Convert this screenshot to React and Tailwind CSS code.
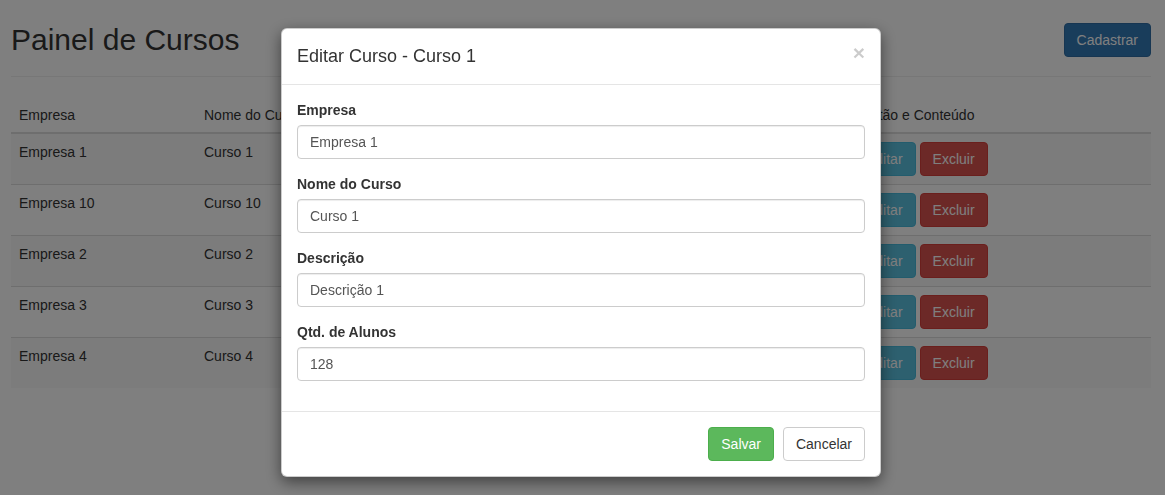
import { useState } from "react";

const cursos = [
  { empresa: "Empresa 1", nome: "Curso 1", descricao: "Descrição 1", alunos: 128 },
  { empresa: "Empresa 10", nome: "Curso 10", descricao: "Descrição 10", alunos: 40 },
  { empresa: "Empresa 2", nome: "Curso 2", descricao: "Descrição 2", alunos: 75 },
  { empresa: "Empresa 3", nome: "Curso 3", descricao: "Descrição 3", alunos: 32 },
  { empresa: "Empresa 4", nome: "Curso 4", descricao: "Descrição 4", alunos: 210 },
];

const Field = ({ label, value, onChange }) => (
  <div className="mb-[15px]">
    <label className="block mb-[5px] text-[14px] leading-[20px] font-bold text-[#333]">
      {label}
    </label>
    <input
      value={value}
      onChange={(e) => onChange(e.target.value)}
      className="block w-full h-[34px] px-[12px] py-[6px] text-[14px] leading-[20px] text-[#555] bg-white border border-[#ccc] rounded-[4px] shadow-[inset_0_1px_1px_rgba(0,0,0,0.075)] outline-none"
    />
  </div>
);

const App = () => {
  const [form, setForm] = useState({
    empresa: "Empresa 1",
    nome: "Curso 1",
    descricao: "Descrição 1",
    alunos: "128",
  });

  const update = (key) => (value) => setForm({ ...form, [key]: value });

  return (
    <div className="relative min-h-[495px] bg-white text-[#333] text-[14px] leading-[20px] font-['Liberation_Sans',Arial,sans-serif]">
      {/* Page */}
      <div className="pl-[11px] pr-[14px]">
        <div className="flex items-start justify-between pt-[23px] pb-[19px] border-b border-[#eee]">
          <h2 className="text-[30px] leading-[33px] font-normal">Painel de Cursos</h2>
          <button className="h-[34px] px-[12px] text-white bg-[#337ab7] border border-[#2e6da4] rounded-[4px]">
            Cadastrar
          </button>
        </div>

        <table className="w-full mt-[20px] table-fixed">
          <colgroup>
            <col className="w-[185px]" />
            <col className="w-[220px]" />
            <col className="w-[260px]" />
            <col className="w-[169px]" />
            <col className="w-[306px]" />
          </colgroup>
          <thead>
            <tr className="text-left">
              <th className="px-[8px] pt-[8px] pb-[7px] font-normal border-b-2 border-[#ddd]">Empresa</th>
              <th className="px-[8px] pt-[8px] pb-[7px] font-normal border-b-2 border-[#ddd]">Nome do Curso</th>
              <th className="px-[8px] pt-[8px] pb-[7px] font-normal border-b-2 border-[#ddd]">Descrição</th>
              <th className="px-[8px] pt-[8px] pb-[7px] font-normal border-b-2 border-[#ddd]">Qtd. de Alunos</th>
              <th className="px-[8px] pt-[8px] pb-[7px] font-normal border-b-2 border-[#ddd]">Gestão e Conteúdo</th>
            </tr>
          </thead>
          <tbody>
            {cursos.map((c, i) => (
              <tr key={c.empresa} className={i % 2 === 0 ? "bg-[#f9f9f9]" : "bg-white"}>
                <td className="p-[8px] align-top border-t border-[#ddd]">{c.empresa}</td>
                <td className="p-[8px] align-top border-t border-[#ddd]">{c.nome}</td>
                <td className="p-[8px] align-top border-t border-[#ddd]">{c.descricao}</td>
                <td className="p-[8px] align-top border-t border-[#ddd]">{c.alunos}</td>
                <td className="p-[8px] align-top border-t border-[#ddd]">
                  <div className="flex gap-[4px]">
                    <button className="h-[34px] px-[12px] text-white bg-[#5bc0de] border border-[#46b8da] rounded-[4px]">
                      Editar
                    </button>
                    <button className="h-[34px] px-[12px] text-white bg-[#d9534f] border border-[#d43f3a] rounded-[4px]">
                      Excluir
                    </button>
                  </div>
                </td>
              </tr>
            ))}
          </tbody>
        </table>
      </div>

      {/* Backdrop */}
      <div className="fixed inset-0 bg-black/50" />

      {/* Modal */}
      <div className="fixed inset-0 overflow-hidden">
        <div className="w-[600px] ml-[281px] mt-[28px] bg-white border border-black/20 rounded-[6px] shadow-[0_5px_15px_rgba(0,0,0,0.5)]">
          <div className="flex items-start justify-between p-[15px] border-b border-[#e5e5e5]">
            <h4 className="text-[18px] leading-[25px] font-normal">Editar Curso - Curso 1</h4>
            <button className="-mt-[2px] text-[21px] leading-[21px] font-bold text-black opacity-20">
              ×
            </button>
          </div>

          <div className="p-[15px]">
            <Field label="Empresa" value={form.empresa} onChange={update("empresa")} />
            <Field label="Nome do Curso" value={form.nome} onChange={update("nome")} />
            <Field label="Descrição" value={form.descricao} onChange={update("descricao")} />
            <Field label="Qtd. de Alunos" value={form.alunos} onChange={update("alunos")} />
          </div>

          <div className="flex justify-end gap-[9px] p-[15px] border-t border-[#e5e5e5]">
            <button className="h-[34px] px-[12px] text-white bg-[#5cb85c] border border-[#4cae4c] rounded-[4px]">
              Salvar
            </button>
            <button className="h-[34px] px-[12px] text-[#333] bg-white border border-[#ccc] rounded-[4px]">
              Cancelar
            </button>
          </div>
        </div>
      </div>
    </div>
  );
};

export default App;
